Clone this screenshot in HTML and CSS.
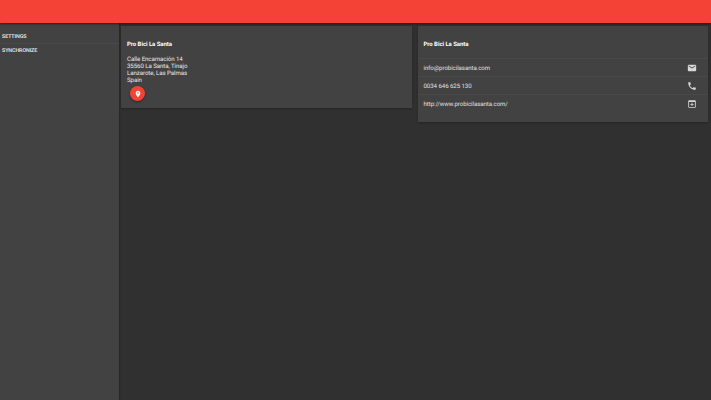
FILE: index.html
```html
<!DOCTYPE html>
<html lang="en">
<head>
    <meta charset="UTF-8">
    <meta name="viewport" content="width=device-width, initial-scale=1.0">
    <title>Pro Bici La Santa</title>
    <link rel="stylesheet" href="styles.css">
</head>
<body>
    <header class="toolbar"></header>
    <div class="main">
        <nav class="sidenav">
            <div class="nav-item">SETTINGS</div>
            <div class="nav-item">SYNCHRONIZE</div>
        </nav>
        <div class="content">
            <section class="card card-address">
                <h2 class="card-title">Pro Bici La Santa</h2>
                <p class="address">Calle Encarnación 14<br>35560 La Santa, Tinajo<br>Lanzarote, Las Palmas<br>Spain</p>
                <button class="fab">
                    <svg viewBox="0 0 24 24" width="8" height="8"><path fill="#fff" d="M12 2C8.13 2 5 5.13 5 9c0 5.25 7 13 7 13s7-7.75 7-13c0-3.87-3.13-7-7-7zm0 9.5a2.5 2.5 0 1 1 0-5 2.5 2.5 0 0 1 0 5z"/></svg>
                </button>
            </section>
            <section class="card card-contact">
                <h2 class="card-title">Pro Bici La Santa</h2>
                <ul class="contact-list">
                    <li class="contact-row">
                        <span class="contact-text">info@probicilasanta.com</span>
                        <svg viewBox="0 0 24 24" width="10" height="10"><path fill="#d8d8d8" d="M20 4H4c-1.100 0-2 .9-2 2v12c0 1.100.9 2 2 2h16c1.100 0 2-.9 2-2V6c0-1.100-.9-2-2-2zm0 4l-8 5-8-5V6l8 5 8-5v2z"/></svg>
                    </li>
                    <li class="contact-row">
                        <span class="contact-text">0034 646 625 130</span>
                        <svg viewBox="0 0 24 24" width="10" height="10"><path fill="#d8d8d8" d="M6.620 10.790c1.440 2.830 3.760 5.140 6.590 6.590l2.200-2.200c.27-.27.67-.36 1.020-.24 1.120.37 2.330.57 3.570.57.550 0 1 .45 1 1V20c0 .550-.45 1-1 1-9.390 0-17-7.610-17-17 0-.550.45-1 1-1h3.500c.550 0 1 .45 1 1 0 1.250.2 2.450.57 3.570.11.350.03.740-.25 1.020l-2.200 2.200z"/></svg>
                    </li>
                    <li class="contact-row">
                        <span class="contact-text">http://www.probicilasanta.com/</span>
                        <svg viewBox="0 0 24 24" width="10" height="10"><path fill="#d8d8d8" fill-rule="evenodd" d="M19 3H5c-1.100 0-2 .9-2 2v14c0 1.100.9 2 2 2h14c1.100 0 2-.9 2-2V5c0-1.100-.9-2-2-2zm0 16H5V7h14v12zM11 9h2v3h3v2h-3v3h-2v-3H8v-2h3V9z"/></svg>
                    </li>
                </ul>
            </section>
        </div>
    </div>
</body>
</html>
```

FILE: styles.css
```css
* {
    box-sizing: border-box;
}
html, body {
    height: 100%;
}
body {
    margin: 0;
    display: flex;
    flex-direction: column;
    overflow: hidden;
    background: #303030;
    color: #fff;
    font-family: Roboto, "Liberation Sans", sans-serif;
    font-size: 6.1px;
    letter-spacing: -0.06px;
    text-rendering: geometricPrecision;
}
.toolbar {
    position: relative;
    z-index: 2;
    flex: none;
    height: 23px;
    background: #f44336;
    box-shadow: 0 1px 2px rgba(0, 0, 0, 0.5);
}
.main {
    flex: 1;
    display: flex;
}
.sidenav {
    flex: none;
    width: 119px;
    padding-top: 7px;
    background: #424242;
    box-shadow: 1px 0 1px rgba(0, 0, 0, 0.15);
}
.nav-item {
    height: 14px;
    padding-left: 2px;
    line-height: 14px;
    font-size: 5.3px;
    font-weight: 500;
    color: #eee;
    border-bottom: 1px solid #494949;
}
.nav-item:last-child {
    border-bottom: 0;
}
.content {
    flex: 1;
    display: flex;
    align-items: flex-start;
    gap: 6px;
    padding: 3px 3px 0 2px;
}
.card {
    flex: 1;
    padding: 0 6px;
    background: #424242;
    box-shadow: 0 1px 2px rgba(0, 0, 0, 0.25);
}
.card-address {
    height: 82px;
}
.card-contact {
    height: 96px;
}
.card-title {
    margin: 0;
    padding-top: 15px;
    font-size: 6px;
    line-height: 8px;
    font-weight: 700;
}
.address {
    margin: 7px 0 0;
    line-height: 7px;
    color: #e8e8e8;
}
.fab {
    display: flex;
    align-items: center;
    justify-content: center;
    width: 15px;
    height: 15px;
    margin: 2px 0 0 3px;
    padding: 0;
    border: 0;
    border-radius: 50%;
    background: #f44336;
    box-shadow: 0 1px 2px rgba(0, 0, 0, 0.4);
}
.contact-list {
    margin: 9px -6px 0;
    padding: 0;
    list-style: none;
}
.contact-row {
    display: flex;
    align-items: center;
    justify-content: space-between;
    height: 18px;
    padding: 0 11px 0 6px;
    border-top: 1px solid #494949;
    color: #e0e0e0;
}
.contact-text {
    margin-top: 2px;
}
```
